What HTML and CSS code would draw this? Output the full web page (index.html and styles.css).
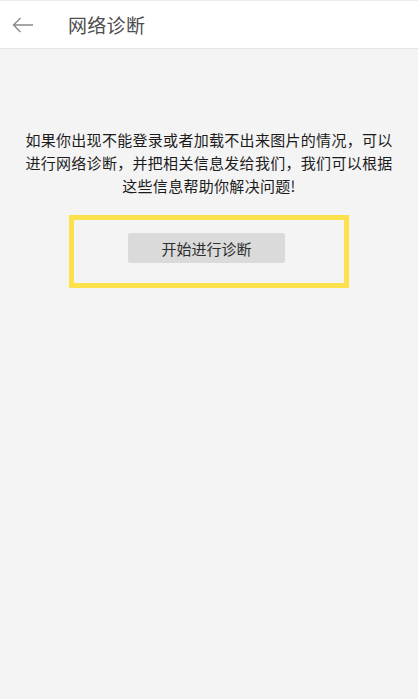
FILE: index.html
```html
<!DOCTYPE html>
<html>
  <head>
    <meta charset="utf-8" />
    <title>网络诊断</title>
    <link rel="stylesheet" href="styles.css">
  </head>
  <body>
    <header class="top-bar">
      <button class="back-button" aria-label="返回">
        <svg viewBox="0 0 22 16" width="22" height="16">
          <path d="M21 8H1.5M8.5 1L1.5 8l7 7" fill="none" stroke="#8a8a8a" stroke-width="1.4" />
        </svg>
      </button>
      <h1 class="page-title">网络诊断</h1>
    </header>

    <main class="diag-page">
      <p class="diag-intro">如果你出现不能登录或者加载不出来图片的情况，可以进行网络诊断，并把相关信息发给我们，我们可以根据这些信息帮助你解决问题!</p>
      <div class="diag-action">
        <button class="start-button">开始进行诊断</button>
      </div>
    </main>
  </body>
</html>
```

FILE: styles.css
```css
* {
  margin: 0;
  padding: 0;
  box-sizing: border-box;
  font-family: "Noto Sans CJK SC", "Noto Sans", sans-serif;
}

html,
body {
  height: 100%;
}

body {
  background: #f4f4f4;
  display: flex;
  flex-direction: column;
}

.top-bar {
  height: 49px;
  display: flex;
  align-items: center;
  background: #ffffff;
  border-top: 1px solid #ececec;
  border-bottom: 1px solid #e4e4e4;
}

.back-button {
  width: 56px;
  height: 48px;
  padding-left: 12px;
  display: flex;
  align-items: center;
  background: transparent;
  border: none;
  cursor: pointer;
}

.page-title {
  margin-left: 12px;
  font-size: 19px;
  font-weight: 400;
  color: #4d4d4d;
  letter-spacing: 0.3px;
}

.diag-page {
  flex: 1;
  padding: 79px 20px 0;
}

.diag-intro {
  font-size: 15px;
  line-height: 23px;
  letter-spacing: 0.3px;
  color: #1c1c1c;
  text-align: center;
}

.diag-action {
  width: 280px;
  margin: 18px auto 0;
  padding: 13px 5px 20px 0;
  border: 5px solid #fde14b;
  display: flex;
  justify-content: center;
}

.start-button {
  width: 157px;
  height: 30px;
  background: #d9dad9;
  border: none;
  border-radius: 2px;
  font-size: 15px;
  color: #2e2e2e;
  cursor: pointer;
}
```
